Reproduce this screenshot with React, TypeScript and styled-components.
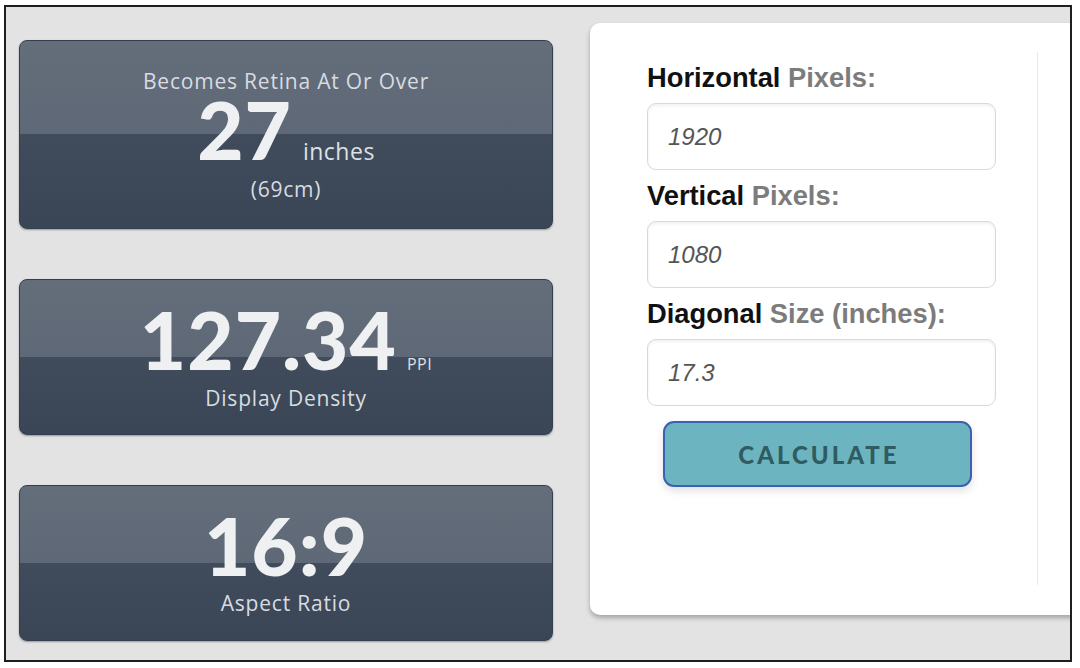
import React from 'react';
import styled, { createGlobalStyle } from 'styled-components';

const GlobalStyle = createGlobalStyle`
  html, body {
    margin: 0;
    padding: 0;
    background: #ffffff;
  }
  * {
    box-sizing: border-box;
  }
`;

const Frame = styled.div`
  margin: 5px 0 0 4px;
  width: 1068px;
  height: 657px;
  border: 2px solid #1e1e1e;
  background: #e3e3e3;
  overflow: hidden;
  display: flex;
  align-items: flex-start;
`;

const ResultColumn = styled.div`
  flex: 0 0 auto;
  width: 547px;
  padding: 33px 0 0 13px;
  display: flex;
  flex-direction: column;
  gap: 50px;
`;

const ResultCard = styled.div<{ $height: number }>`
  width: 534px;
  height: ${(p) => p.$height}px;
  border-radius: 8px;
  border: 1px solid #33404f;
  background: linear-gradient(
    to bottom,
    #646e7b 0%,
    #5e6876 50%,
    #404c5c 50%,
    #3a4656 100%
  );
  box-shadow: 0 1px 2px rgba(0, 0, 0, 0.35);
  display: flex;
  flex-direction: column;
  align-items: center;
  justify-content: center;
  font-family: 'Open Sans', 'DejaVu Sans', sans-serif;
  color: #d8dce1;
`;

const CardLabel = styled.div<{ $offset?: number }>`
  font-size: 21px;
  line-height: 26px;
  letter-spacing: 0.8px;
  margin-top: ${(p) => p.$offset ?? 0}px;
`;

const ValueRow = styled.div`
  display: flex;
  align-items: baseline;
`;

const BigValue = styled.span`
  font-family: Lato, 'Open Sans', sans-serif;
  font-weight: 900;
  font-size: 80px;
  line-height: 70px;
  letter-spacing: 1px;
  color: #eef0f2;
`;

const Unit = styled.span<{ $size: number; $gap: number }>`
  font-size: ${(p) => p.$size}px;
  margin-left: ${(p) => p.$gap}px;
  letter-spacing: 0.5px;
  color: #dde1e5;
`;

const Panel = styled.div`
  flex: 0 0 auto;
  margin: 16px 0 0 37px;
  width: 520px;
  height: 592px;
  background: #ffffff;
  border-radius: 10px;
  box-shadow: 0 3px 5px rgba(0, 0, 0, 0.28);
  padding: 29px 0 0 28px;
`;

const Form = styled.div`
  width: 420px;
  height: 533px;
  border-right: 1px solid #e9e9e9;
  padding: 9px 0 0 29px;
  display: flex;
  flex-direction: column;
  font-family: 'Liberation Sans', Arial, sans-serif;
`;

const FieldLabel = styled.div`
  font-size: 27.3px;
  line-height: 33px;
  font-weight: 700;
  color: #111111;
  margin-bottom: 9px;
`;

const Muted = styled.span`
  color: #7c7c7c;
`;

const Input = styled.input`
  width: 349px;
  height: 67px;
  margin: 0 0 9px 0;
  padding: 0 20px;
  border: 1px solid #d9d9d9;
  border-radius: 9px;
  background: #ffffff;
  box-shadow: inset 0 2px 3px rgba(0, 0, 0, 0.06);
  font-family: 'Liberation Sans', Arial, sans-serif;
  font-style: italic;
  font-size: 24px;
  color: #555555;
  outline: none;
`;

const CalcButton = styled.button`
  margin: 6px 0 0 16px;
  width: 309px;
  height: 66px;
  border: 2px solid #3c60b4;
  border-radius: 11px;
  background: #6cb5c0;
  box-shadow: 0 4px 8px rgba(0, 0, 0, 0.12);
  font-family: Lato, 'Open Sans', sans-serif;
  font-weight: 900;
  font-size: 24px;
  letter-spacing: 3px;
  padding: 0 0 0 3px;
  color: #2f5b61;
  cursor: pointer;
`;

const App: React.FC = () => {
  return (
    <>
      <GlobalStyle />
      <Frame>
        <ResultColumn>
          <ResultCard $height={189}>
            <CardLabel>Becomes Retina At Or Over</CardLabel>
            <ValueRow>
              <BigValue>27</BigValue>
              <Unit $size={23} $gap={11}>inches</Unit>
            </ValueRow>
            <CardLabel $offset={9}>(69cm)</CardLabel>
          </ResultCard>
          <ResultCard $height={156}>
            <ValueRow>
              <BigValue>127.34</BigValue>
              <Unit $size={16} $gap={10}>PPI</Unit>
            </ValueRow>
            <CardLabel $offset={10}>Display Density</CardLabel>
          </ResultCard>
          <ResultCard $height={156}>
            <ValueRow>
              <BigValue>16:9</BigValue>
            </ValueRow>
            <CardLabel $offset={10}>Aspect Ratio</CardLabel>
          </ResultCard>
        </ResultColumn>
        <Panel>
          <Form>
            <FieldLabel>
              Horizontal <Muted>Pixels:</Muted>
            </FieldLabel>
            <Input defaultValue="1920" />
            <FieldLabel>
              Vertical <Muted>Pixels:</Muted>
            </FieldLabel>
            <Input defaultValue="1080" />
            <FieldLabel>
              Diagonal <Muted>Size (inches):</Muted>
            </FieldLabel>
            <Input defaultValue="17.3" />
            <CalcButton>CALCULATE</CalcButton>
          </Form>
        </Panel>
      </Frame>
    </>
  );
};

export default App;
